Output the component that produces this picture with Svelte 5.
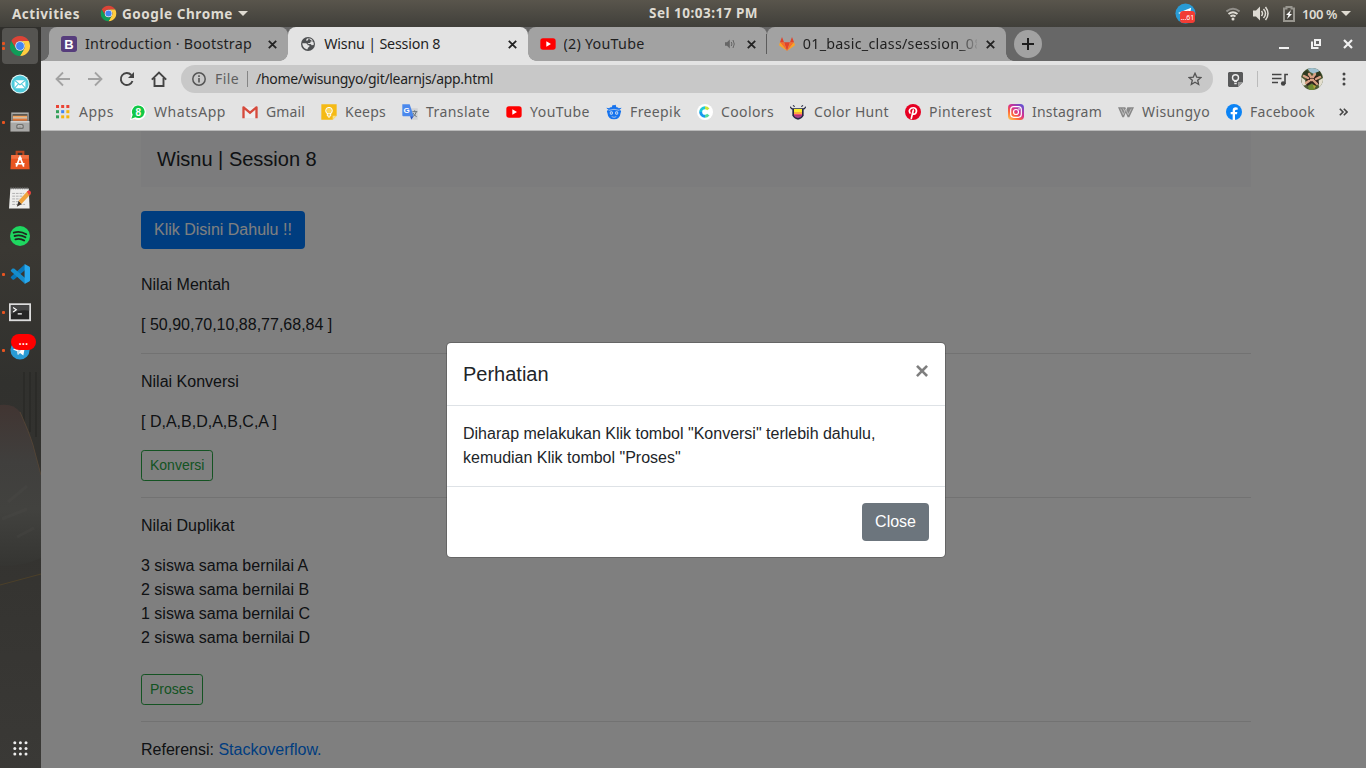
<script>
  const bookmarks = [
    ['apps', 'Apps', 35],
    ['whatsapp', 'WhatsApp', 72],
    ['gmail', 'Gmail', 39],
    ['keeps', 'Keeps', 41],
    ['translate', 'Translate', 64],
    ['youtube', 'YouTube', 60],
    ['freepik', 'Freepik', 51],
    ['coolors', 'Coolors', 53],
    ['hunt', 'Color Hunt', 75],
    ['pinterest', 'Pinterest', 63],
    ['instagram', 'Instagram', 70],
    ['wisungyo', 'Wisungyo', 68],
    ['facebook', 'Facebook', 65],
  ];
  const tabs = [
    { icon: 'bootstrap', title: 'Introduction · Bootstrap', w: 167 },
    { icon: 'globe', title: 'Wisnu | Session 8', w: 116, active: true },
    { icon: 'youtube', title: '(2) YouTube', w: 81, audio: true },
    { icon: 'gitlab', title: '01_basic_class/session_08', w: 180, clip: true, line: true },
  ];
  const dock = [
    { icon: 'chrome', dots: 2, active: true },
    { icon: 'mail' },
    { icon: 'files', dots: 1 },
    { icon: 'software' },
    { icon: 'notes' },
    { icon: 'spotify' },
    { icon: 'vscode', dots: 1 },
    { icon: 'terminal', dots: 1 },
    { icon: 'telegram', dots: 1 },
  ];
  const grid = [0, 1, 2];
  const appColors = ['#ea4335', '#ea4335', '#ea4335', '#34a05a', '#4285f4', '#f5b50f', '#34a05a', '#f5b50f', '#f5b50f'];

  // Tracks a label out to a fixed width.
  function fit(node, w) {
    const natural = node.getBoundingClientRect().width;
    node.style.letterSpacing = (w - natural) / node.textContent.length + 'px';
    node.style.width = w + 'px';
  }
</script>

{#snippet icon(name, size)}
  <svg class="ic" width={size} height={size} viewBox="0 0 48 48" aria-hidden="true">
    {#if name === 'chrome'}
      <path fill="#db4437" d="M24 13H43.05A22 22 0 0 0 4.95 13L14.47 29.5A11 11 0 0 1 24 13Z" />
      <path fill="#ffcd40" d="M24 13H43.05A22 22 0 0 1 24 46L33.53 29.5A11 11 0 0 0 24 13Z" />
      <path fill="#0f9d58" d="M14.47 29.5L4.95 13A22 22 0 0 0 24 46L33.53 29.5A11 11 0 0 1 14.47 29.5Z" />
      <circle cx="24" cy="24" r="10.5" fill="#f1f1f1" />
      <circle cx="24" cy="24" r="8.6" fill="#4285f4" />
    {:else if name === 'bootstrap'}
      <rect width="48" height="48" rx="8" fill="#563d7c" />
      <text x="24" y="38" text-anchor="middle" font-size="39" font-weight="700" fill="#fff" font-family="Liberation Sans, sans-serif">B</text>
    {:else if name === 'globe'}
      <circle cx="24" cy="24" r="21" fill="#4d4f51" />
      <path fill="#e3e3e3" d="M7 22h10c4 0 6 3 6 6h5v5c-3 0-5 2-5 7-9 0-16-8-16-18ZM25 7c6 0 10 2 13 6-2 3-4 4-7 4v4h-8c0 2 3 3 6 3 4 0 5 2 6 4l6-1c0-3 1-5-1-9M19 10c2-3 4-3 7-3l-2 6-5 2z" />
    {:else if name === 'youtube'}
      <rect x="1" y="7" width="46" height="34" rx="8" fill="#f00" />
      <path fill="#fff" d="M19 16l14 8-14 8z" />
    {:else if name === 'gitlab'}
      <path fill="#e24329" d="M24 45L15 19h18z" />
      <path fill="#fc6d26" d="M24 45L15 19H3zM24 45l9-26h12z" />
      <path fill="#fca326" d="M3 19L0 28l24 17zM45 19l3 9-24 17z" />
      <path fill="#e24329" d="M3 19L9 3l6 16zM45 19L39 3l-6 16z" />
    {:else if name === 'apps'}
      {#each appColors as c, i}
        <rect x={3 + (i % 3) * 15.5} y={3 + Math.floor(i / 3) * 15.5} width="9" height="9" fill={c} />
      {/each}
    {:else if name === 'whatsapp'}
      <path fill="#fff" d="M0 48l4-14A23 23 0 1 1 14 45z" />
      <path fill="#12c846" d="M4 44l4-12a19 19 0 1 1 8 8z" />
      <text x="24.500" y="35" text-anchor="middle" font-size="30" font-weight="700" fill="#fff" font-family="Liberation Sans, sans-serif">8</text>
    {:else if name === 'gmail'}
      <path fill="#eee" d="M3 9h42v33H3z" />
      <path fill="#d64a3c" d="M1 10q0-4 5-3l18 15L42 7q5-1 5 3v33h-7V17L24 31 8 17v26H1z" />
    {:else if name === 'keeps'}
      <path fill="#f5ba15" d="M1 1h46v34L35 47H1z" />
      <path fill="#fbe07f" d="M47 35H35v12z" />
      <circle cx="24" cy="20" r="10" fill="#fbd65c" stroke="#fff" stroke-width="3" />
      <path stroke="#fff" stroke-width="3" fill="none" d="M19 29v7h10v-7M21 39h6" />
    {:else if name === 'translate'}
      <path fill="#d0d2d5" d="M20 13h27v34H29z" />
      <path fill="#4a88ed" d="M1 1h22l12 36H4q-3 0-3-3z" />
      <path fill="#2857c8" d="M24 37h11l-7 10z" />
      <text x="14" y="28" text-anchor="middle" font-size="24" font-weight="700" fill="#fff" font-family="Liberation Sans, sans-serif">G</text>
      <path stroke="#68727b" stroke-width="3" fill="none" d="M31 23h15M38 19v4M43 23q-3 10-9 14M33 27q4 8 11 11" />
    {:else if name === 'freepik'}
      <path fill="#1673ee" d="M17 10q-6-1-7 3L1 11q3 4 7 6Q0 20 4 26q2 19 20 20 18-1 20-20 4-6-4-9 4-2 7-6l-9 2q-2-4-7-3l-2-8-5 2-4-1z" />
      <path fill="none" stroke="#e3e3e3" stroke-width="2" d="M8 19q16-6 32 0M17 38q7 4 14 0" />
      <circle cx="16" cy="27" r="5" fill="#d5e3f4" /><circle cx="32" cy="27" r="5" fill="#d5e3f4" />
      <circle cx="16" cy="27" r="2.500" fill="#1673ee" /><circle cx="32" cy="27" r="2.500" fill="#1673ee" />
    {:else if name === 'coolors'}
      <circle cx="24" cy="24" r="24" fill="#fff" />
      <g fill="none" stroke-width="9"><path stroke="#1899ef" d="M24 37A13 13 0 0 1 11 24" /><path stroke="#1dc9d8" d="M11 24A13 13 0 0 1 24 11" /><path stroke="#c9e437" d="M24 11q6 0 10 5" /><path stroke="#55dd9c" d="M24 37q6 0 10-5" /></g>
    {:else if name === 'hunt'}
      <path d="M7 13h34v21q-3 10-17 13Q10 44 7 34z" fill="#252943" />
      <path fill="#fbec2e" d="M12 15h24v9H12z" /><path fill="#fbab3c" d="M12 24h24v6H12z" /><path fill="#f54b78" d="M12 30h24v5H12z" /><path fill="#ae408d" d="M12 35h24q-3 5-12 7-9-2-12-7z" />
      <path stroke="#252943" stroke-width="3.500" fill="none" d="M1 8q3 8 9 7M47 8q-3 8-9 7M9 4l5 4M39 4l-5 4" />
    {:else if name === 'pinterest'}
      <circle cx="24" cy="24" r="24" fill="#e60023" />
      <path fill="none" stroke="#fff" stroke-width="5" stroke-linecap="round" d="M15 27q-5-9 3-14 8-4 14 1 5 6 0 14-5 5-10 0M25 18l-6 25" />
    {:else if name === 'instagram'}
      <defs><linearGradient id="ig" x1="0" y1="1" x2=".8" y2="0"><stop stop-color="#ffd65b" /><stop offset=".35" stop-color="#ff6937" /><stop offset=".62" stop-color="#d52f91" /><stop offset="1" stop-color="#6651d1" /></linearGradient></defs>
      <rect width="48" height="48" rx="11" fill="url(#ig)" />
      <g fill="none" stroke="#fff" stroke-width="3.500"><rect x="8" y="8" width="32" height="32" rx="9" /><circle cx="24" cy="24" r="7.500" /></g>
      <circle cx="33" cy="15" r="2.500" fill="#fff" />
    {:else if name === 'wisungyo'}
      <path fill="#888" d="M0 10h22l3 8 3-8h20l-14 30h-5l-6-14-5 14h-5z" />
      <path stroke="#d5d5d5" stroke-width="2" fill="none" d="M8 14l8 18 7-17 8 17 9-18M15 13l5 9" />
    {:else if name === 'facebook'}
      <circle cx="24" cy="24" r="24" fill="#0b83f5" />
      <path fill="#fff" d="M20 48V31h-6v-7h6v-5q0-9 9-9l6 1v6h-4q-4 0-4 4v3h7l-1 7h-6v17z" />
    {:else if name === 'mail'}
      <circle cx="24" cy="24" r="23" fill="#e8f8f8" /><circle cx="24" cy="24" r="20.500" fill="#50cbdc" />
      <rect x="11" y="15" width="26" height="19" rx="2" fill="#fff" /><path fill="none" stroke="#50cbdc" stroke-width="2.500" d="M11 15l13 11 13-11M11 34l9-10M37 34l-9-10" />
    {:else if name === 'files'}
      <path fill="#a9a9a6" d="M3 1h42v20H3z" /><path fill="#55504b" d="M6 5h36v16H6z" />
      <path fill="#f8a65d" d="M7 9h34v4H7z" /><path fill="#fff0d8" d="M7 13h34v3H7z" /><path fill="#dd7538" d="M7 16h34v5H7z" />
      <path fill="#a9a9a7" d="M1 22h46v25H1z" /><path fill="#ddd" d="M2 22h44v3H2z" /><rect x="15" y="29" width="18" height="12" rx="4" fill="#71716e" /><rect x="18" y="32" width="12" height="6" rx="2" fill="#ccc" /><path stroke="#71716e" stroke-width="2" d="M20 36h8" />
    {:else if name === 'software'}
      <path fill="none" stroke="#b94720" stroke-width="5" d="M16 13V4h16v9" />
      <path fill="#e95420" d="M3 12h42l2 34H1z" /><path fill="#f16f40" d="M3 12h42v9H3z" />
      <path fill="none" stroke="#fff" stroke-width="4" d="M15 40l9-23 9 23M13 33h22" /><circle cx="24" cy="20" r="4" fill="#fff" />
    {:else if name === 'notes'}
      <path fill="#eeeeec" d="M3 3h40l2 44H0z" />
      <path stroke="#777" stroke-width="4" stroke-dasharray="3 2" d="M3 3h40" />
      <path stroke="#aaa" stroke-width="2" d="M7 14h26M7 20h23M7 26h18M7 32h14M7 38h28" stroke-dasharray="6 2" />
      <path fill="#3b342e" d="M17 43l4-13 7 7z" /><path fill="#f0a33b" d="M21 30L40 9l7 7-20 21z" /><path fill="#e94141" d="M39 10l4-3q6 2 5 7l-4 4z" />
    {:else if name === 'spotify'}
      <circle cx="24" cy="24" r="24" fill="#1ed760" />
      <path fill="none" stroke="#20291f" stroke-linecap="round" stroke-width="4.500" d="M9 16q16-5 30 4M11 24q14-4 26 3M13 32q12-3 21 3" />
    {:else if name === 'vscode'}
      <path fill="#0877ba" d="M35 1L3 30q-3 2 0 4l3 3q2 1 4 0L37 14z" /><path fill="#168dcc" d="M35 47L3 18q-3-2 0-4l3-3q2-1 4 0l27 23z" /><path fill="#28a8ee" d="M35 0l11 6q2 1 2 3v30q0 2-2 3l-11 6V0z" />
    {:else if name === 'terminal'}
      <path fill="#ddd" d="M0 5h48v39H0z" /><path fill="#262626" d="M4 9h40v31H4z" /><path fill="#444" d="M4 9h40v12Q22 18 4 29z" />
      <path stroke="#fff" stroke-width="2.500" fill="none" d="M9 14l7 5-7 5M19 28h9" />
    {:else if name === 'telegram'}
      <circle cx="24" cy="24" r="23" fill="#299bd5" />
      <path fill="#fff" d="M7 23L37 11l-5 26-8-6-5 5-2-9z" />
      <path fill="#b9d8e8" d="M17 27l15-12-9 14-4 7z" />
    {/if}
  </svg>
{/snippet}

{#snippet cross()}
  <svg class="ic" width="9" height="9" viewBox="0 0 9 9"><path d="M.8.8l7.400 7.400M8.200.8L.8 8.200" stroke="#222" stroke-width="1.800" /></svg>
{/snippet}

<div class="desktop">
  <header class="topbar">
    <span class="lbl act" use:fit={68}>Activities</span>
    {@render icon('chrome', 17)}
    <span class="lbl gc" use:fit={111}>Google Chrome</span>
    <i class="tri"></i>
    <span class="lbl clock" use:fit={109}>Sel 10:03:17 PM</span>
    <span class="tray">
      {@render icon('telegram', 21)}
      <span class="count">...61</span>
    </span>
    <svg class="ic wifi" width="14" height="14" viewBox="0 0 14 14" fill="none" stroke-width="2"><path stroke="#918f8a" d="M.5 4.500q6.500-5.500 13 0" /><path stroke="#dedbd4" d="M2.500 7q4.500-3.500 9 0M4.500 9.500q2.500-2 5 0" /><circle cx="7" cy="12" r="1.500" fill="#dedbd4" /></svg>
    <svg class="ic vol" width="16" height="15" viewBox="0 0 16 15"><path fill="#dedbd4" d="M0 4.500h3l4-4v14l-4-4H0z" /><path fill="none" stroke="#dedbd4" stroke-width="1.500" d="M8.500 5q2 2.500 0 5M10.500 3q4 4.500 0 9M12.500 1q5 6.500 0 13" /></svg>
    <svg class="ic bat" width="12" height="16" viewBox="0 0 12 16"><path fill="none" stroke="#98968f" stroke-width="2" d="M1 2.500h2.500V1h5v1.500H11V15H1z" /><path fill="#fff" d="M8 4L3 9h2.500L4 13l5-5H6.500z" /></svg>
    <span class="lbl pct" use:fit={35}>100 %</span>
    <i class="tri end"></i>
  </header>

  <div class="work">
    <nav class="dock">
      <svg class="wall" width="41" height="741" viewBox="0 0 41 741">
        <defs>
          <linearGradient id="wg" x2="0" y2="1"><stop stop-color="#302f2c" /><stop offset=".3" stop-color="#3a3833" /><stop offset=".48" stop-color="#31312e" /><stop offset=".75" stop-color="#353431" /><stop offset="1" stop-color="#3a3936" /></linearGradient>
          <linearGradient id="figure" x2="0" y2="1"><stop stop-color="#413532" /><stop offset=".35" stop-color="#403f3d" /><stop offset=".65" stop-color="#42423f" /><stop offset="1" stop-color="#353532" /></linearGradient>
        </defs>
        <path fill="url(#wg)" d="M0 0h41v741H0z" />
        <path stroke="#2b2b28" stroke-width="2" d="M24 345v55M30 345v60M36 345v65" />
        <path fill="url(#figure)" d="M0 378q13-2 20 7 9 20 13 33l8 30v83q-20 9-41 8z" />
        <path fill="none" stroke="#5b4836" d="M20 385q9 20 13 33l8 30" opacity=".7" />
        <path stroke="#51504d" stroke-width="3" d="M8 475l19-16M2 492l25-10M17 510l17-9" opacity=".2" />
        <path stroke="#4c4029" d="M0 558l41-11" />
      </svg>
      {#each dock as item}
        <div class="slot" class:active={item.active}>
          {#if item.dots}<span class="dots" class:two={item.dots === 2}></span>{/if}
          {@render icon(item.icon, item.icon === 'chrome' || item.icon === 'terminal' || item.icon === 'notes' ? 22 : 20)}
          {#if item.icon === 'telegram'}<span class="badge">...</span>{/if}
        </div>
      {/each}
      <svg class="ic launcher" width="15" height="15" viewBox="0 0 15 15" fill="#eee">
        {#each grid as r}{#each grid as c}<circle cx={1.8 + c * 5.6} cy={1.8 + r * 5.6} r="1.500" />{/each}{/each}
      </svg>
    </nav>

    <main class="browser">
      <div class="tabs">
        <span class="lead"></span>
        {#each tabs as t}
          <div class="tab" class:on={t.active} class:line={t.line}>
            {@render icon(t.icon, 16)}
            <span class="title" class:clip={t.clip}><span class="lbl" use:fit={t.w}>{t.title}</span></span>
            {#if t.audio}
              <svg class="ic audio" width="10" height="10" viewBox="0 0 10 10"><path fill="#666" d="M0 3.200h2L4.800.5v9L2 6.800H0z" /><path fill="none" stroke="#666" d="M6.300 3q1.300 2 0 4M8 1q2.500 4 0 8" /></svg>
            {/if}
            {@render cross()}
          </div>
        {/each}
        <div class="new"><span class="plus"><svg class="ic" width="12" height="12" viewBox="0 0 12 12"><path stroke="#1d1d1d" stroke-width="2" d="M6 0v12M0 6h12" /></svg></span></div>
        <div class="win">
          <svg class="ic" width="10" height="10" viewBox="0 0 10 10"><path stroke="#f2f2f2" stroke-width="2" d="M0 9h10" /></svg>
          <svg class="ic" width="10" height="10" viewBox="0 0 10 10"><path fill="none" stroke="#f2f2f2" stroke-width="2" d="M4 1h5v5H4zM1 2.500V9h6.500" /></svg>
          <svg class="ic" width="10" height="10" viewBox="0 0 10 10"><path stroke="#f2f2f2" stroke-width="2.200" d="M1 1l8 8M9 1L1 9" /></svg>
        </div>
      </div>

      <div class="toolbar">
        <svg class="ic" width="16" height="16" viewBox="0 0 16 16" fill="none" stroke="#a2a2a2" stroke-width="1.800"><path d="M15 8H2M8 1.500L1.500 8 8 14.500" /></svg>
        <svg class="ic" width="16" height="16" viewBox="0 0 16 16" fill="none" stroke="#a2a2a2" stroke-width="1.800"><path d="M1 8h13M8 1.500L14.500 8 8 14.500" /></svg>
        <svg class="ic" width="16" height="16" viewBox="0 0 16 16"><path fill="none" stroke="#444" stroke-width="1.900" d="M13.500 10A6 6 0 1 1 12.300 4" /><path fill="#444" d="M15 1v6H9z" /></svg>
        <svg class="ic" width="16" height="16" viewBox="0 0 16 16"><path fill="none" stroke="#444" stroke-width="1.900" d="M.8 8.600L8 1.500l7.200 7.100M3.500 7v8h9V7" /></svg>
        <div class="omni">
          <svg class="ic" width="14" height="14" viewBox="0 0 14 14"><circle cx="7" cy="7" r="6.200" fill="none" stroke="#555" stroke-width="1.500" /><path stroke="#555" stroke-width="1.600" d="M7 6v4.500M7 3.200v1.700" /></svg>
          <span class="lbl file" use:fit={24}>File</span>
          <i class="rule"></i>
          <span class="lbl url" use:fit={237}>/home/wisungyo/git/learnjs/app.html</span>
          <svg class="ic star" width="14" height="14" viewBox="0 0 14 14"><path fill="none" stroke="#555" stroke-width="1.300" d="M7 1.300l1.700 3.800 4.200.4-3.200 2.800 1 4.200L7 10.300l-3.700 2.200 1-4.200L1.100 5.500l4.200-.4z" /></svg>
        </div>
        <svg class="ic ext" width="15" height="15" viewBox="0 0 15 15"><path fill="#58595a" d="M1 0h13l1 1v9l-5 5H1l-1-1V1z" /><path fill="#999" d="M15 10h-5v5z" /><circle cx="7.500" cy="5.800" r="3" fill="none" stroke="#eee" stroke-width="1.400" /><path stroke="#eee" stroke-width="1.300" d="M6 9.500h3M6.300 11.700h2.400" /></svg>
        <i class="rule sep"></i>
        <svg class="ic media" width="16" height="13" viewBox="0 0 16 13"><path stroke="#444" stroke-width="1.600" fill="none" d="M0 1.500h9.500M0 5.500h9.500M0 9.500h6M13 11V1.500h3" /><circle cx="11.200" cy="10.500" r="2.300" fill="#444" /></svg>
        <svg class="ic avatar" width="22" height="22" viewBox="0 0 22 22">
          <defs><clipPath id="round"><circle cx="11" cy="11" r="11" /></clipPath></defs>
          <g clip-path="url(#round)">
            <path fill="#4d5a35" d="M0 0h22v22H0z" /><path fill="#9fc0cf" d="M6 0h13l-1 4-5 2-4-2z" /><path fill="#2f3a20" d="M1 5l5-3 3 4-4 3zM14 5l5-2 2 6-5 1z" />
            <path fill="#e4dfcf" d="M0 9l4 3 1 5-4 1zM17 13l5-3v8l-4 1z" />
            <path fill="#30201a" d="M5 8h12l1 8-4 2-3-3-5 3z" />
            <path fill="none" stroke="#d9a184" stroke-width="2.400" stroke-linecap="round" d="M3 8l4 2M8 6l2 3M14 6l-2 3M19 9l-4 2M5 15l3-2M16 16l-3-3M10 12h2" />
            <path fill="#6d8a32" d="M7 18l4-2 4 2-2 4H8z" /><path fill="#b8a23a" d="M12 17l3 1-2 3z" />
          </g>
        </svg>
        <svg class="ic more" width="4" height="14" viewBox="0 0 4 14" fill="#444"><circle cx="2" cy="2" r="1.500" /><circle cx="2" cy="7" r="1.500" /><circle cx="2" cy="12" r="1.500" /></svg>
      </div>

      <div class="marks">
        {#each bookmarks as [id, name, w]}
          <span class="mark">{@render icon(id, 16)}<span class="lbl" use:fit={w}>{name}</span></span>
        {/each}
        <svg class="ic chev" width="9" height="8" viewBox="0 0 9 8"><path fill="none" stroke="#444" stroke-width="1.600" d="M.8.8L4 4 .8 7.200M4.800.8L8 4 4.800 7.200" /></svg>
      </div>

      <section class="page">
        <div class="container">
          <div class="navbar">Wisnu | Session 8</div>
          <button class="btn primary">Klik Disini Dahulu !!</button>
          <p>Nilai Mentah</p>
          <p>[ 50,90,70,10,88,77,68,84 ]</p>
          <hr />
          <p>Nilai Konversi</p>
          <p>[ D,A,B,D,A,B,C,A ]</p>
          <button class="btn sm">Konversi</button>
          <hr />
          <p>Nilai Duplikat</p>
          <p class="list">3 siswa sama bernilai A<br />2 siswa sama bernilai B<br />1 siswa sama bernilai C<br />2 siswa sama bernilai D</p>
          <button class="btn sm">Proses</button>
          <hr />
          <p>Referensi: <span class="link">Stackoverflow.</span></p>
        </div>
        <div class="backdrop">
          <div class="modal">
            <div class="head"><span>Perhatian</span><b class="x">×</b></div>
            <div class="body">Diharap melakukan Klik tombol "Konversi" terlebih dahulu, kemudian Klik tombol "Proses"</div>
            <div class="foot"><button class="btn secondary">Close</button></div>
          </div>
        </div>
      </section>
    </main>
  </div>
</div>

<style>
  :global(body) { overflow: hidden; background: #353431; }
  * { box-sizing: border-box; }
  .desktop { width: 1366px; height: 768px; display: flex; flex-direction: column; overflow: hidden; font: 14px/20px "Noto Sans", "Open Sans", sans-serif; }
  .ic { display: block; flex: none; }
  .lbl { display: inline-block; flex: none; white-space: nowrap; }

  .topbar { height: 27px; display: flex; align-items: center; background: linear-gradient(#59554c, #403f3a); color: #dfdbd2; font-size: 13.5px; font-weight: 700; padding-left: 12px; }
  .act { margin-right: 20px; }
  .gc { margin-left: 5px; }
  .tri { border: 5px solid transparent; border-top-color: #dfdbd2; border-bottom: 0; margin-left: 5px; }
  .tri.end { margin-left: 4px; }
  .clock { margin-left: 401px; margin-top: -1px; }
  .tray { position: relative; margin-left: 417px; }
  .count { position: absolute; left: 5px; top: 8px; width: 15px; height: 12px; border-radius: 3px; background: #f23c34; color: #fff; font: 7px/13px "Noto Sans", sans-serif; text-align: center; }
  .wifi { margin-left: 30px; }
  .vol { margin-left: 13px; }
  .bat { margin-left: 14px; }
  .pct { margin-left: 7px; font-size: 13px; font-weight: 600; }

  .work { display: flex; height: 741px; }
  .dock { width: 41px; flex: none; position: relative; display: flex; flex-direction: column; align-items: center; padding: 1px 1px 0 0; }
  .wall { position: absolute; left: 0; top: 0; }
  .slot { position: relative; width: 36px; height: 36px; margin-bottom: 2px; border-radius: 4px; display: flex; align-items: center; justify-content: center; flex: none; }
  .slot.active { background: #555451; }
  .dots { position: absolute; left: 0; top: 17px; width: 3px; height: 3px; border-radius: 1px; background: #e95420; }
  .dots.two { top: 14px; box-shadow: 0 5px #e95420; }
  .badge { position: absolute; left: 9px; top: 2px; width: 25px; height: 16px; border-radius: 8px; background: #f00; color: #fff; text-align: center; font: 500 12px/14px "Noto Sans", sans-serif; }
  .launcher { position: relative; margin-top: auto; margin-bottom: 12px; }

  .browser { width: 1325px; display: flex; flex-direction: column; background: #e3e3e3; }
  .tabs { height: 34px; display: flex; background: #676767; overflow: hidden; }
  .lead { width: 8px; background: radial-gradient(circle at 0 0, #676767 7.500px, #a2a2a2 8px) left bottom / 8px 8px no-repeat; }
  .tab { width: 239.250px; height: 34px; display: flex; align-items: center; padding: 0 11px 0 12px; background: #a2a2a2; border-radius: 8px 8px 0 0; color: #1f1f1f; flex: none; font-size: 14.300px; position: relative; }
  .tab.on { background: #e3e3e3; z-index: 1; }
  .tab.on::before, .tab.on::after { content: ""; position: absolute; bottom: 0; width: 8px; height: 8px; }
  .tab.on::before { right: 100%; background: radial-gradient(circle at 0 0, transparent 7.500px, #e3e3e3 8px); }
  .tab.on::after { left: 100%; background: radial-gradient(circle at 100% 0, transparent 7.500px, #e3e3e3 8px); }
  .tab.line::before { content: ""; position: absolute; left: -1px; top: 7px; height: 20px; width: 1px; background: #5c5c5c; }
  .title { flex: 1; margin-left: 8px; overflow: hidden; white-space: nowrap; height: 20px; }
  .clip { max-width: 174px; mask-image: linear-gradient(90deg, #000 156px, transparent 176px); }
  .clip + :global(.ic) { margin-left: auto; }
  .audio { margin-right: 12px; }
  .new { flex: 1; display: flex; align-items: center; padding-left: 8px; background: radial-gradient(circle at 100% 0, #676767 7.500px, #a2a2a2 8px) left bottom / 8px 8px no-repeat; }
  .plus { width: 28px; height: 28px; border-radius: 50%; background: #a2a2a2; display: flex; align-items: center; justify-content: center; }
  .win { display: flex; align-items: center; gap: 22px; padding-right: 13px; }

  .toolbar { height: 36px; display: flex; align-items: center; gap: 16px; padding: 0 20px 0 14px; }
  .omni { width: 1032px; height: 28px; margin-left: -2px; border-radius: 14px; background: #c8c8c8; display: flex; align-items: center; padding: 0 11px; }
  .file { margin: 0 8px 0 9px; color: #5f5f5f; }
  .url { margin-left: 8px; color: #1f1f1f; }
  .rule { width: 1px; height: 16px; background: #858585; }
  .star { margin-left: auto; }
  .ext { margin-left: -1px; }
  .sep { background: #bbb; margin-left: -2px; margin-right: -2px; }
  .avatar { margin-left: -3px; }
  .more { margin-left: 3px; }

  .marks { height: 33px; display: flex; align-items: center; gap: 16px; padding: 0 18px 4px 14px; color: #5f5f5f; }
  .mark { display: flex; align-items: center; gap: 8px; }
  .chev { margin-left: auto; }

  .page { position: relative; flex: 1; background: #fff; border-top: 1px solid #b9b9b9; overflow: hidden; font: 16px/24px "Liberation Sans", Arial, sans-serif; color: #212529; }
  .container { width: 1110px; margin-left: 100px; }
  .navbar { height: 56px; padding: 13px 16px; line-height: 30px; font-size: 20px; background: #f8f9fa; margin-bottom: 24px; }
  p { margin: 0 0 16px; }
  hr { border: 0; border-top: 1px solid rgba(0, 0, 0, .1); margin: 16px 0; }
  .btn { display: block; height: 38px; padding: 6px 12px; border: 1px solid transparent; border-radius: 4px; font: 16px/24px "Liberation Sans", Arial, sans-serif; color: #fff; }
  .primary { background: #007bff; margin-bottom: 24px; }
  .sm { height: 31px; padding: 4px 8px; font-size: 14px; line-height: 21px; border-radius: 3.200px; color: #28a745; border-color: #28a745; background: none; }
  .list { margin-bottom: 24px; }
  .link { color: #007bff; }
  .backdrop { position: absolute; inset: -1px 0 0; background: rgba(0, 0, 0, .5); padding: 212px 0 0 405px; }
  .modal { width: 500px; border: 1px solid rgba(0, 0, 0, .2); border-radius: 5px; background: #fff; background-clip: padding-box; }
  .head { display: flex; justify-content: space-between; padding: 16px; height: 63px; border-bottom: 1px solid #dee2e6; font-size: 20px; line-height: 30px; }
  .x { font-size: 24px; line-height: 24px; color: #000; opacity: .5; }
  .body { padding: 16px; }
  .foot { display: flex; justify-content: flex-end; padding: 16px; border-top: 1px solid #dee2e6; }
  .secondary { background: #6c757d; }
</style>
